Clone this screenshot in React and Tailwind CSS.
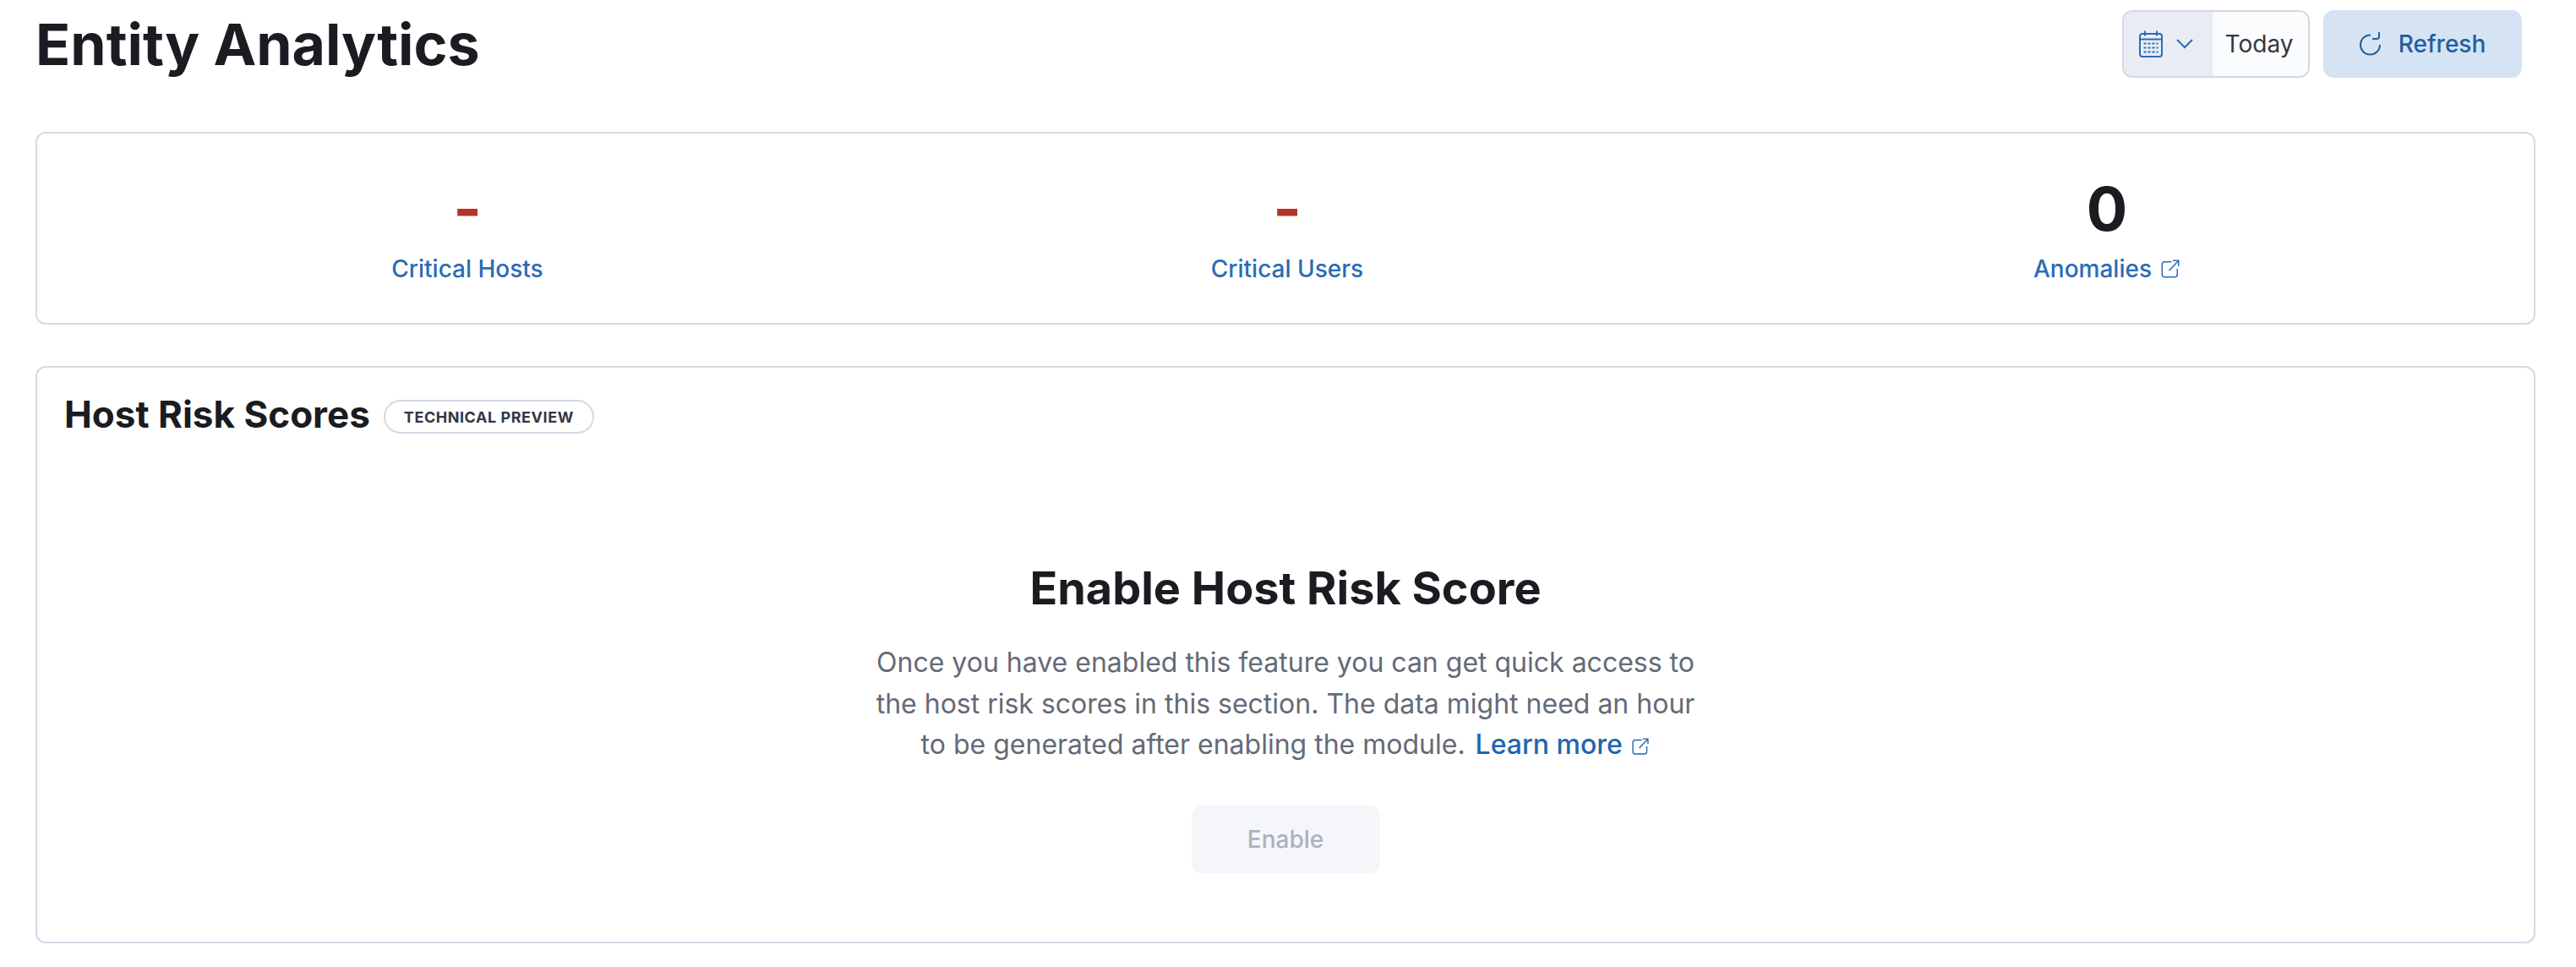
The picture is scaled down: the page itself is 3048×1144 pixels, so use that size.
const font = { fontFamily: 'Inter, "Liberation Sans", sans-serif' };

function Popout({ className }) {
  return (
    <svg viewBox="0 0 16 16" fill="none" stroke="currentColor" strokeWidth="1" className={className}>
      <path d="M9 2.5H3.5a2 2 0 0 0-2 2v8a2 2 0 0 0 2 2h8a2 2 0 0 0 2-2V8" />
      <path d="M7 9.5 14.5 1.5M10 1.5h4.5V6" />
    </svg>
  );
}

function CalendarIcon() {
  return (
    <svg viewBox="0 0 28 32" className="w-[28px] h-[32px] text-[#2b6cb8]" fill="none" stroke="currentColor" strokeWidth="2">
      <rect x="1" y="4" width="26" height="27" rx="3" />
      <path d="M1 10.5h26M7 0.5v6M21 0.5v6" />
      <path strokeDasharray="3 2" d="M5.5 15.5h17M5.5 20.5h17M5.5 25.5h17" />
    </svg>
  );
}

function Stat({ value, label, danger, external }) {
  return (
    <div className="flex flex-col items-center">
      <div className={`text-[72px] leading-[86px] font-bold ${danger ? 'text-[#b4342a]' : 'text-[#1a1c21]'}`}>{value}</div>
      <div className="mt-[8px] flex items-center gap-[10px] text-[28px] leading-[40px] font-medium text-[#2a6cb5]">
        {label}
        {external && <Popout className="w-[24px] h-[24px]" />}
      </div>
    </div>
  );
}

export default function App() {
  return (
    <div style={font} className="bg-white w-[3048px] h-[1144px] pl-[42px] pr-[48px] text-[#1a1c21] overflow-hidden">
      <div className="h-[156px] flex justify-between items-start pr-[16px]">
        <h1 className="text-[68px] leading-[80px] font-bold mt-[12px] text-[#1a1c21]">Entity Analytics</h1>
        <div className="flex gap-[16px] mt-[12px]">
          <div className="w-[222px] h-[80px] flex border-2 border-[#d3dae6] rounded-[12px] overflow-hidden">
            <div className="w-[105px] bg-[#e9edf3] flex items-center gap-[16px] pl-[18px]">
              <CalendarIcon />
              <svg viewBox="0 0 20 12" className="w-[20px] h-[12px] text-[#2b6cb8]" fill="none" stroke="currentColor" strokeWidth="2">
                <path d="M1 1l9 9 9-9" />
              </svg>
            </div>
            <div className="flex-1 bg-[#fbfcfe] flex items-center justify-center pr-[3px] text-[28px] text-[#343741]">Today</div>
          </div>
          <div className="w-[235px] h-[80px] rounded-[12px] bg-[#d6e3f3] flex items-center justify-center gap-[20px] text-[28px] font-medium text-[#20609f]">
            <svg viewBox="0 0 26 28" className="w-[26px] h-[28px]" fill="none" stroke="currentColor" strokeWidth="2">
              <path d="M13 3.5a11.5 11.5 0 1 0 11 11.5" />
              <path d="M23 0v5a3 3 0 0 1-3 3h-5" />
            </svg>
            Refresh
          </div>
        </div>
      </div>

      <div className="w-[2958px] h-[228px] border-2 border-[#d3dae6] rounded-[12px] grid grid-cols-3 gap-[50px] pl-[49px] pr-[45px] pt-[46px]">
        <Stat value="-" label="Critical Hosts" danger />
        <Stat value="-" label="Critical Users" danger />
        <Stat value="0" label="Anomalies" external />
      </div>

      <div className="w-[2958px] h-[683px] mt-[49px] border-2 border-[#d3dae6] rounded-[12px] pt-[28px] px-[32px] flex flex-col">
        <div className="flex items-center gap-[16px]">
          <h2 className="text-[44px] leading-[54px] font-bold">Host Risk Scores</h2>
          <span className="h-[40px] px-[22px] mt-[6px] flex items-center rounded-full border-2 border-[#d3dae6] text-[18px] font-bold tracking-[0.55px] text-[#343741]">TECHNICAL PREVIEW</span>
        </div>
        <div className="flex flex-col items-center mt-[147px]">
          <h3 className="text-[54px] leading-[64px] font-bold">Enable Host Risk Score</h3>
          <p className="mt-[32px] w-[1000px] text-center text-[32px] leading-[48.5px] text-[#646a77]">
            Once you have enabled this feature you can get quick access to the host risk scores in this section. The data might need an hour to be generated after enabling the module.{' '}
            <span className="ml-[3px] font-medium text-[#1f65b1] whitespace-nowrap">
              Learn more <Popout className="inline-block w-[22px] h-[22px] ml-[2px]" />
            </span>
          </p>
          <div className="mt-[47px] w-[223px] h-[80px] rounded-[12px] bg-[#f5f6f9] flex items-center justify-center text-[28px] font-medium text-[#abb2c0]">Enable</div>
        </div>
      </div>
    </div>
  );
}
